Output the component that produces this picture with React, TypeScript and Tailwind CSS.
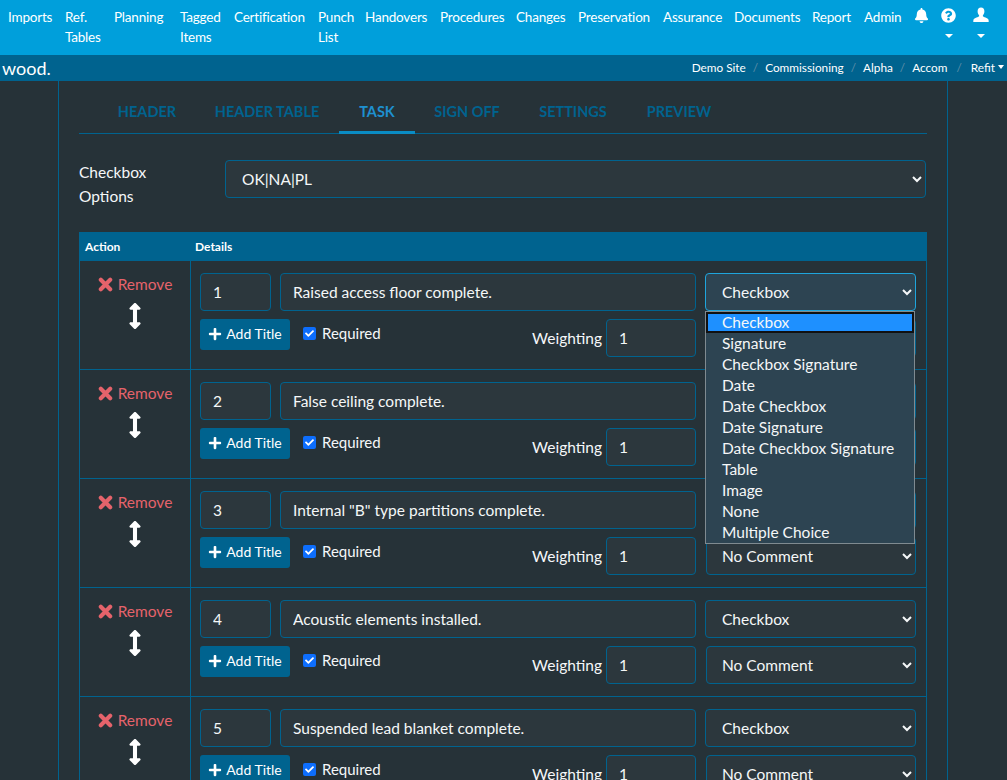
import React from "react";
import { FaBell, FaQuestionCircle, FaArrowsAltV, FaPlus, FaCheck } from "react-icons/fa";

const font = { fontFamily: 'Lato, "Noto Sans", sans-serif' };

const nav: [string[], string][] = [
  [["Imports"], "w-[57px]"],
  [["Ref.", "Tables"], "w-[49px]"],
  [["Planning"], "w-[66px]"],
  [["Tagged", "Items"], "w-[54px]"],
  [["Certification"], "w-[84px]"],
  [["Punch", "List"], "w-[47px]"],
  [["Handovers"], "w-[75px]"],
  [["Procedures"], "w-[76px]"],
  [["Changes"], "w-[62px]"],
  [["Preservation"], "w-[85px]"],
  [["Assurance"], "w-[71px]"],
  [["Documents"], "w-[78px]"],
  [["Report"], "w-[52px]"],
  [["Admin"], "w-[50px]"],
];

const options = [
  "Checkbox",
  "Signature",
  "Checkbox Signature",
  "Date",
  "Date Checkbox",
  "Date Signature",
  "Date Checkbox Signature",
  "Table",
  "Image",
  "None",
  "Multiple Choice",
];

const rows = [
  "Raised access floor complete.",
  "False ceiling complete.",
  'Internal "B" type partitions complete.',
  "Acoustic elements installed.",
  "Suspended lead blanket complete.",
];

const field = "h-[38px] rounded border text-[#f5f7f8] text-[15.5px] outline-none";
const idle = "border-[#00638f] bg-[#2c373d]";
const focused = "border-[#1fa5dc] bg-[#2d4452]";

function Row({ n, text, open }: { n: number; text: string; open: boolean }) {
  return (
    <div className="flex h-[109px] border-b border-x border-[#00638f]">
      <div className="w-[111px] shrink-0 border-r border-[#00638f] flex flex-col items-center pt-[12px]">
        <div className="flex items-center gap-[5px] text-[15.5px] leading-[22px] text-[#e5636b]">
          <svg viewBox="0 0 16 16" className="w-[15px] h-[15px]">
            <path d="M3 3L13 13M13 3L3 13" stroke="#e5636b" strokeWidth="4.4" strokeLinecap="round" fill="none" />
          </svg>
          <span>Remove</span>
        </div>
        <FaArrowsAltV className="text-white text-[26px] mt-[8px]" />
      </div>
      <div className="flex-1 pl-[9px] pt-[12px] relative">
        <div className="flex">
          <input readOnly value={n} className={`${field} ${idle} w-[71px] px-[12px]`} />
          <input readOnly value={text} className={`${field} ${idle} w-[416px] ml-[9px] px-[12px]`} />
          <select
            className={`${field} ${open ? focused : idle} w-[211px] ml-[9px] px-[12px]`}
            defaultValue="Checkbox"
          >
            <option>Checkbox</option>
          </select>
        </div>
        <div className="flex mt-[8px]">
          <button className="h-[31px] w-[90px] pb-[2px] rounded-[3px] bg-[#00638f] text-white text-[14px] flex items-center justify-center gap-[4px]">
            <FaPlus className="text-[14px]" />
            <span>Add Title</span>
          </button>
          <span className="ml-[13px] w-[13px] h-[13px] mt-[8px] rounded-[2px] bg-[#0d6efd] flex items-center justify-center">
            <FaCheck className="text-white text-[9px]" />
          </span>
          <span className="ml-[6px] text-[15px] leading-[29px] text-[#f5f7f8]">Required</span>
          <span className="ml-auto text-[15.5px] leading-[38px] text-[#f5f7f8]">Weighting</span>
          <input readOnly value="1" className={`${field} ${idle} w-[90px] ml-[4px] px-[12px]`} />
          <select className={`${field} ${idle} w-[210px] ml-[10px] mr-[10px] px-[11px]`} defaultValue="No Comment">
            <option>No Comment</option>
          </select>
        </div>
        {open && (
          <div className="absolute left-[514px] top-[50px] z-10 w-[210px] border border-[#7f8a90] bg-[#2d4452] text-[15.5px] leading-[21px] text-[#f5f7f8]">
            {options.map((o, i) => (
              <div
                key={o}
                className={i === 0 ? "pl-[14px] h-[21px] bg-[#1e90ff] border-2 border-[#111] leading-[17px]" : "pl-[16px] h-[21px]"}
              >
                {o}
              </div>
            ))}
          </div>
        )}
      </div>
    </div>
  );
}

function Sep({ last }: { last?: boolean }) {
  return <span className={`${last ? "mx-[9px]" : "mx-[7px]"} text-[#5f8fa8]`}>/</span>;
}

export default function App() {
  return (
    <div style={font} className="h-[780px] overflow-hidden bg-[#263238] text-white">
      <header className="h-[55px] bg-[#009fdb] flex pl-[2px] text-[13.5px] tracking-[-0.2px] leading-[20px] pt-[7px]">
        {nav.map(([lines, w]) => (
          <div key={lines[0]} className={`${w} shrink-0 pl-[6px]`}>
            {lines.map((l) => (
              <div key={l}>{l}</div>
            ))}
          </div>
        ))}
        <FaBell className="text-[15px] mt-[1px] ml-[6px] shrink-0" />
        <div className="ml-[12px] w-[15px] flex flex-col items-center">
          <FaQuestionCircle className="text-[15px] mt-[1px] shrink-0" />
          <span className="mt-[11px] w-0 h-0 border-x-[4px] border-x-transparent border-t-[4px] border-t-white" />
        </div>
        <div className="ml-[17px] w-[16px] flex flex-col items-center">
          <svg viewBox="0 0 16 16" className="w-[16px] h-[16px] shrink-0" fill="white">
            <path d="M8 0.5c2.2 0 3.4 1.7 3.4 3.8 0 1.6-.6 3-1.5 3.9v1.1c0 .8 5.1 1.6 5.6 3.4.2.7.2 1.8.2 2.3H.3c0-.5 0-1.6.2-2.3.5-1.8 5.6-2.6 5.6-3.4V8.2C5.2 7.3 4.6 5.9 4.6 4.3 4.6 2.2 5.8.5 8 .5z" />
          </svg>
          <span className="mt-[11px] w-0 h-0 border-x-[4px] border-x-transparent border-t-[4px] border-t-white" />
        </div>
      </header>
      <div className="h-[26px] bg-[#00638f] flex items-center text-[11.8px]">
        <span className="pl-[2px] text-[18px] leading-[24px]">wood.</span>
        <div className="ml-auto flex items-center pr-[3px]">
          <span>Demo Site</span>
          <Sep />
          <span>Commissioning</span>
          <Sep />
          <span>Alpha</span>
          <Sep />
          <span>Accom</span>
          <Sep last />
          <span>Refit</span>
          <span className="ml-[3px] mb-[2px] w-0 h-0 border-x-[3.5px] border-x-transparent border-t-[4px] border-t-white" />
        </div>
      </div>
      <main className="ml-[58px] w-[890px] h-[699px] border-x border-[#00638f] px-[20px] pt-[12px]">
        <nav className="flex h-[41px] border-b border-[#00638f] text-[14.5px] font-bold">
          {[
            ["HEADER", "w-[96px] ml-[20px]"],
            ["HEADER TABLE", "w-[144px]"],
            ["TASK", "w-[76px]"],
            ["SIGN OFF", "w-[104px]"],
            ["SETTINGS", "w-[108px]"],
            ["PREVIEW", "w-[104px]"],
          ].map(([t, w]) => (
            <div
              key={t}
              className={`${w} h-[41px] flex justify-center pt-[8px] ${t === "TASK" ? "text-[#1e90d0] border-b-[3px] border-[#0a8cc4]" : "text-[#00638f]"}`}
            >
              {t}
            </div>
          ))}
        </nav>
        <div className="flex mt-[26px]">
          <div className="w-[146px] text-[15.5px] leading-[24px] text-[#f5f7f8]">
            Checkbox
            <br />
            Options
          </div>
          <select className={`${field} ${idle} w-[701px] px-[12px]`} defaultValue="OK|NA|PL">
            <option>OK|NA|PL</option>
          </select>
        </div>
        <div className="mt-[24px] w-[848px]">
          <div className="flex h-[29px] bg-[#00638f] items-center text-[12px] font-bold">
            <div className="w-[111px] pl-[6px]">Action</div>
            <div className="pl-[5px]">Details</div>
          </div>
          {rows.map((t, i) => (
            <Row key={t} n={i + 1} text={t} open={i === 0} />
          ))}
        </div>
      </main>
    </div>
  );
}
